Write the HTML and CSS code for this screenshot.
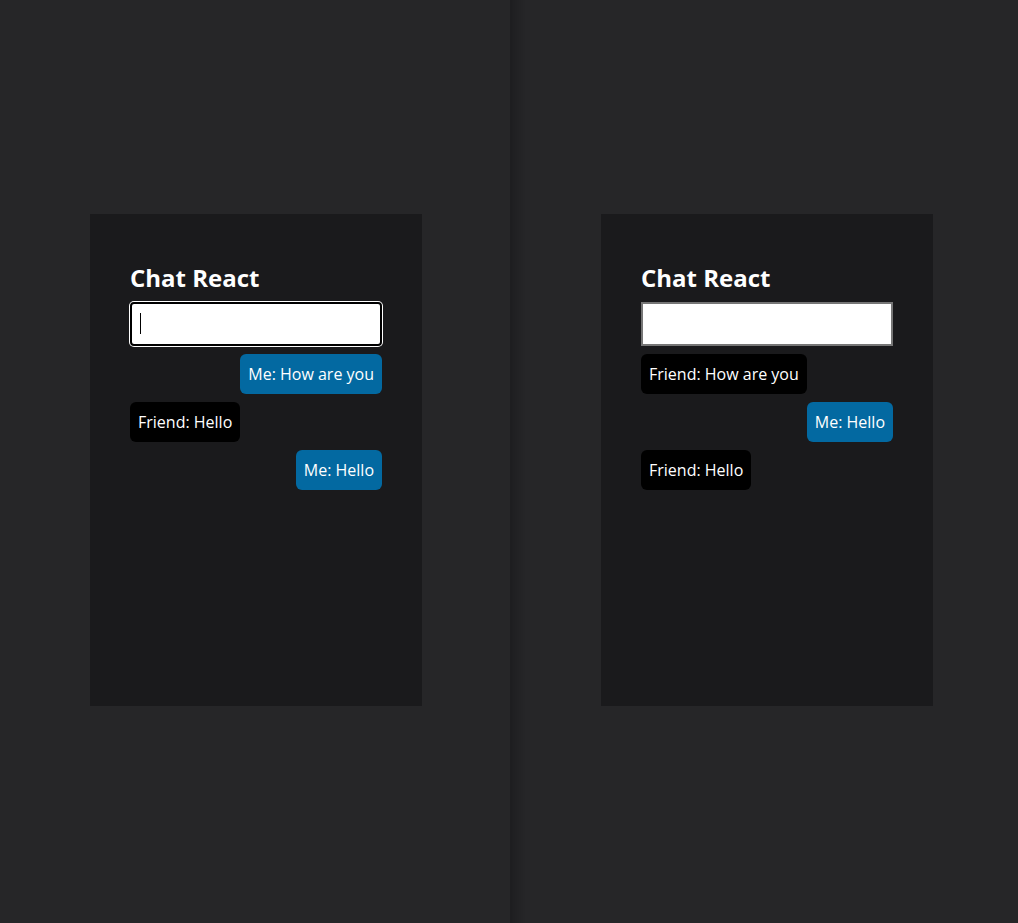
FILE: index.html
```html
<!DOCTYPE html>
<html>
<head>
<meta charset="utf-8">
<link rel="stylesheet" href="styles.css">
</head>
<body>
<div class="split">
  <section class="pane">
    <div class="card">
      <h1 class="title">Chat React</h1>
      <div class="field">
        <input class="input input-focus" type="text">
        <span class="caret"></span>
      </div>
      <div class="messages">
        <div class="msg me">Me: How are you</div>
        <div class="msg friend">Friend: Hello</div>
        <div class="msg me">Me: Hello</div>
      </div>
    </div>
  </section>
  <div class="divider"></div>
  <section class="pane pane-right">
    <div class="card">
      <h1 class="title">Chat React</h1>
      <div class="field">
        <input class="input" type="text">
      </div>
      <div class="messages">
        <div class="msg friend">Friend: How are you</div>
        <div class="msg me">Me: Hello</div>
        <div class="msg friend">Friend: Hello</div>
      </div>
    </div>
  </section>
</div>
</body>
</html>
```
FILE: styles.css
```css
html, body {
  margin: 0;
  padding: 0;
  height: 100%;
}
body {
  background: #262628;
  font-family: "Open Sans", sans-serif;
  color: #fff;
}
.split {
  display: flex;
  height: 100%;
}
.pane {
  width: 510px;
  display: flex;
  align-items: center;
  justify-content: center;
  padding-left: 2px;
  padding-bottom: 3px;
  box-sizing: border-box;
}
.pane-right {
  flex: 1;
  width: auto;
  padding-left: 4px;
  background: linear-gradient(to right, #1f1f21 0px, #262628 14px);
}
.divider {
  width: 2px;
  background: #1e1e20;
}
.card {
  width: 332px;
  height: 492px;
  background: #1a1a1c;
  padding: 40px;
  box-sizing: border-box;
  display: flex;
  flex-direction: column;
}
.title {
  margin: 0;
  font-size: 24px;
  font-weight: 700;
  line-height: 48px;
}
.field {
  position: relative;
  height: 44px;
}
.input {
  width: 100%;
  height: 44px;
  box-sizing: border-box;
  border: 2px solid #767676;
  background: #fff;
  margin: 0;
  padding: 0 8px;
  font-family: "Open Sans", sans-serif;
  font-size: 16px;
  border-radius: 0;
  outline: none;
}
.input-focus {
  border: 2px solid #000;
  border-radius: 4px;
  box-shadow: 0 0 0 1px #fff;
}
.caret {
  position: absolute;
  left: 10px;
  top: 11px;
  width: 1px;
  height: 21px;
  background: #000;
}
.messages {
  display: flex;
  flex-direction: column;
  gap: 8px;
  margin-top: 8px;
}
.msg {
  padding: 0 8px;
  height: 40px;
  line-height: 40px;
  font-size: 16px;
  border-radius: 6px;
  color: #fff;
}
.me {
  align-self: flex-end;
  background: #0369a1;
}
.friend {
  align-self: flex-start;
  background: #000;
}
```
